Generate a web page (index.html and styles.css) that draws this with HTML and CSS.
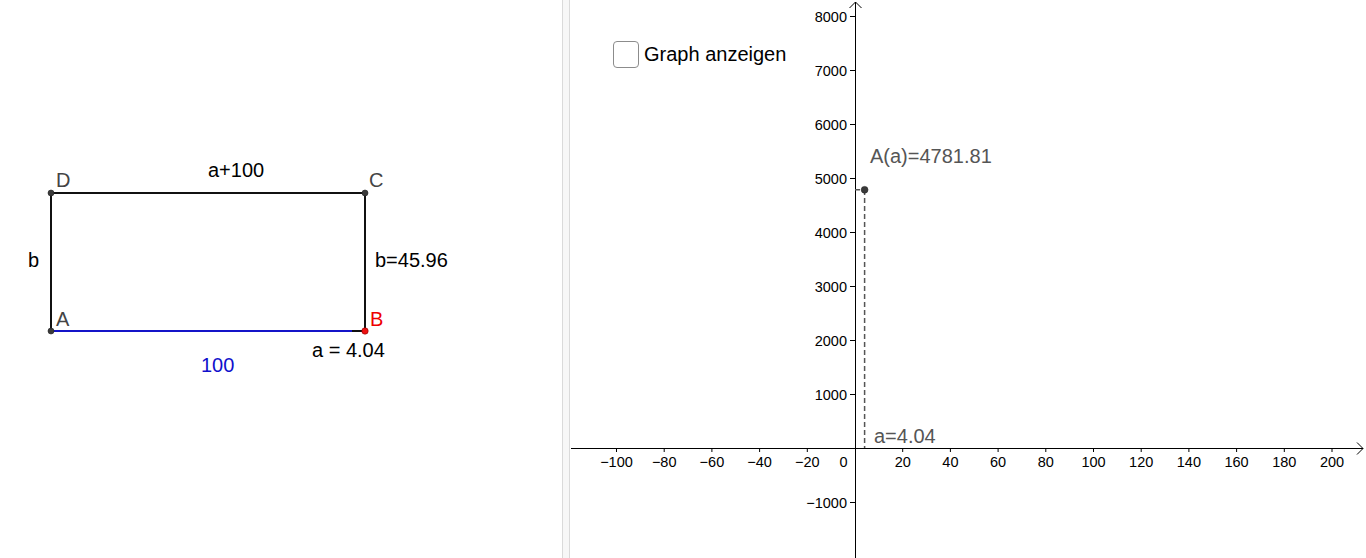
FILE: index.html
```html
<!DOCTYPE html>
<html>
<head>
<meta charset="utf-8">
<link rel="stylesheet" href="styles.css">
</head>
<body>
<div class="app">
  <div class="view left">
    <svg class="canvas" width="562" height="558" viewBox="0 0 562 558">
      <line class="seg" x1="51" y1="193" x2="365" y2="193"/>
      <line class="seg" x1="51" y1="331" x2="51" y2="193"/>
      <line class="seg" x1="365" y1="193" x2="365" y2="331"/>
      <line class="seg" x1="352" y1="331" x2="365" y2="331"/>
      <line class="seg blue" x1="51" y1="331" x2="352" y2="331"/>
      <circle class="pt" cx="51" cy="331" r="3"/>
      <circle class="pt" cx="51" cy="193" r="3"/>
      <circle class="pt" cx="365" cy="193" r="3"/>
      <circle class="pt red" cx="365" cy="331" r="3.2"/>
      <text class="lbl gray" x="56" y="187">D</text>
      <text class="lbl gray" x="369" y="187">C</text>
      <text class="lbl gray" x="56" y="326">A</text>
      <text class="lbl redtext" x="370" y="326">B</text>
      <text class="lbl" x="208" y="177">a+100</text>
      <text class="lbl" x="28" y="267">b</text>
      <text class="lbl" x="375" y="267">b=45.96</text>
      <text class="lbl" x="312" y="357">a = 4.04</text>
      <text class="lbl bluetext" x="201" y="372">100</text>
    </svg>
  </div>
  <div class="divider"></div>
  <div class="view right">
    <svg class="canvas" width="796" height="558" viewBox="0 0 796 558">
      <line class="axis" x1="1" y1="448.5" x2="793" y2="448.5"/>
      <polyline class="axis" points="787,442.5 793,448.5 787,454.5"/>
      <line class="axis" x1="285.5" y1="2" x2="285.5" y2="558"/>
      <polyline class="axis" points="279.5,8 285.5,2 291.5,8"/>
      <g class="ticks">
        <line x1="46.5" y1="448" x2="46.5" y2="452"/>
        <line x1="94.2" y1="448" x2="94.2" y2="452"/>
        <line x1="141.9" y1="448" x2="141.9" y2="452"/>
        <line x1="189.6" y1="448" x2="189.6" y2="452"/>
        <line x1="237.3" y1="448" x2="237.3" y2="452"/>
        <line x1="332.7" y1="448" x2="332.7" y2="452"/>
        <line x1="380.4" y1="448" x2="380.4" y2="452"/>
        <line x1="428.1" y1="448" x2="428.1" y2="452"/>
        <line x1="475.8" y1="448" x2="475.8" y2="452"/>
        <line x1="523.5" y1="448" x2="523.5" y2="452"/>
        <line x1="571.2" y1="448" x2="571.2" y2="452"/>
        <line x1="618.9" y1="448" x2="618.9" y2="452"/>
        <line x1="666.6" y1="448" x2="666.6" y2="452"/>
        <line x1="714.3" y1="448" x2="714.3" y2="452"/>
        <line x1="762" y1="448" x2="762" y2="452"/>
        <line x1="280" y1="16.5" x2="285" y2="16.5"/>
        <line x1="280" y1="70.5" x2="285" y2="70.5"/>
        <line x1="280" y1="124.5" x2="285" y2="124.5"/>
        <line x1="280" y1="178.5" x2="285" y2="178.5"/>
        <line x1="280" y1="232.5" x2="285" y2="232.5"/>
        <line x1="280" y1="286.5" x2="285" y2="286.5"/>
        <line x1="280" y1="340.5" x2="285" y2="340.5"/>
        <line x1="280" y1="394.5" x2="285" y2="394.5"/>
        <line x1="280" y1="502.5" x2="285" y2="502.5"/>
      </g>
      <g class="xlab">
        <text x="46.5" y="467">−100</text>
        <text x="94.2" y="467">−80</text>
        <text x="141.9" y="467">−60</text>
        <text x="189.6" y="467">−40</text>
        <text x="237.3" y="467">−20</text>
        <text x="273.5" y="467">0</text>
        <text x="332.7" y="467">20</text>
        <text x="380.4" y="467">40</text>
        <text x="428.1" y="467">60</text>
        <text x="475.8" y="467">80</text>
        <text x="523.5" y="467">100</text>
        <text x="571.2" y="467">120</text>
        <text x="618.9" y="467">140</text>
        <text x="666.6" y="467">160</text>
        <text x="714.3" y="467">180</text>
        <text x="762" y="467">200</text>
      </g>
      <g class="ylab">
        <text x="277" y="21.5">8000</text>
        <text x="277" y="75.5">7000</text>
        <text x="277" y="129.5">6000</text>
        <text x="277" y="183.5">5000</text>
        <text x="277" y="237.5">4000</text>
        <text x="277" y="291.5">3000</text>
        <text x="277" y="345.5">2000</text>
        <text x="277" y="399.5">1000</text>
        <text x="277" y="507.5">−1000</text>
      </g>
      <line class="dash" x1="294.6" y1="190" x2="294.6" y2="448"/>
      <line class="dash" x1="285" y1="189.8" x2="294.6" y2="189.8"/>
      <circle class="pt" cx="294.6" cy="189.8" r="3.4"/>
      <text class="lbl gray2" x="300" y="163">A(a)=4781.81</text>
      <text class="lbl gray2" x="304" y="443">a=4.04</text>
    </svg>
    <label class="check">
      <span class="box"></span>
      <span class="check-text">Graph anzeigen</span>
    </label>
  </div>
</div>
</body>
</html>
```
FILE: styles.css
```css
html, body {
  margin: 0;
  padding: 0;
  background: #ffffff;
  font-family: "Liberation Sans", Arial, sans-serif;
}
.app {
  display: flex;
  width: 1366px;
  height: 558px;
  overflow: hidden;
}
.view {
  height: 558px;
  background: #ffffff;
}
.left {
  width: 562px;
  flex: none;
}
.right {
  flex: 1;
  position: relative;
}
.divider {
  width: 6px;
  flex: none;
  background: #f7f7f7;
  border-left: 1px solid #dadada;
  border-right: 1px solid #dadada;
}
.canvas {
  display: block;
}
.seg {
  stroke: #111111;
  stroke-width: 2;
}
.seg.blue {
  stroke: #1414c8;
}
.pt {
  fill: #3a3a3a;
  stroke: #222;
  stroke-width: 0.6;
}
.pt.red {
  fill: #ee1111;
  stroke: #8a0000;
}
.lbl {
  font-family: "Liberation Sans", Arial, sans-serif;
  font-size: 20px;
  fill: #000;
}
.lbl.gray {
  fill: #444444;
}
.lbl.gray2 {
  fill: #555555;
}
.lbl.redtext {
  fill: #ee0000;
}
.lbl.bluetext {
  fill: #1010cc;
}
.axis {
  stroke: #000;
  stroke-width: 1;
  fill: none;
}
.ticks line {
  stroke: #000;
  stroke-width: 1;
}
.xlab text, .ylab text {
  font-family: "Liberation Sans", Arial, sans-serif;
  font-size: 14.5px;
  fill: #000;
}
.xlab text {
  text-anchor: middle;
}
.ylab text {
  text-anchor: end;
}
.dash {
  stroke: #555;
  stroke-width: 1.5;
  stroke-dasharray: 5 3;
}
.check {
  position: absolute;
  left: 43px;
  top: 41px;
  display: flex;
  align-items: center;
  gap: 5px;
}
.box {
  width: 24px;
  height: 25px;
  border: 1px solid #8c8c8c;
  border-radius: 4px;
  background: #fff;
}
.check-text {
  font-size: 20px;
  line-height: 23px;
  color: #000;
}
```
